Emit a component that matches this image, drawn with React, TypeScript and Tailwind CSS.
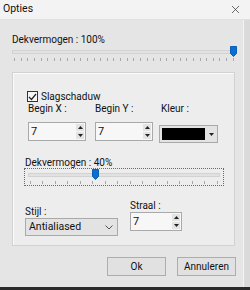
import { X } from "lucide-react";

const font = { fontFamily: '"Roboto", "Noto Sans", sans-serif' };

function Ticks({ count }: { count: number }) {
  return (
    <div className="flex justify-between h-[3px] px-[2px]">
      {Array.from({ length: count }).map((_, i) => (
        <span key={i} className="w-px h-[3px] bg-[#a8a8a8]" />
      ))}
    </div>
  );
}

function Thumb() {
  return (
    <svg width="7" height="11" viewBox="0 0 7 11" className="block">
      <path d="M0.5 0.5 H6.5 V7.5 L3.5 10.5 L0.5 7.5 Z" fill="#0a6fd1" stroke="#0a5fb4" />
    </svg>
  );
}

function Slider({ pos, ticks }: { pos: number; ticks: number }) {
  return (
    <div className="relative">
      <div className="h-[11px] flex items-center">
        <div className="w-full h-[4px] bg-[#e2e2e2] border border-[#d2d2d2]" />
      </div>
      <div className="absolute top-0" style={{ left: pos }}>
        <Thumb />
      </div>
      <div className="mt-[1px]">
        <Ticks count={ticks} />
      </div>
    </div>
  );
}

function Arrow({ up }: { up?: boolean }) {
  return (
    <svg width="5" height="3" viewBox="0 0 5 3" className="block">
      <path d={up ? "M0 3 L2.5 0 L5 3 Z" : "M0 0 L2.5 3 L5 0 Z"} fill="#222" />
    </svg>
  );
}

function Spinner({ value, width }: { value: string; width: string }) {
  return (
    <div className={`flex h-[19px] border border-[#a9a9a9] bg-[#f7f7f7] ${width}`}>
      <div className="flex-1 pl-[2px] text-[11px] leading-[17px] text-[#111]">{value}</div>
      <div className="w-[10px] flex flex-col gap-[1px] p-[1px]">
        <div className="flex-1 bg-[#e3e3e3] flex items-center justify-center">
          <Arrow up />
        </div>
        <div className="flex-1 bg-[#e3e3e3] flex items-center justify-center">
          <Arrow />
        </div>
      </div>
    </div>
  );
}

export default function App() {
  return (
    <div
      className="w-[250px] h-[290px] flex flex-col bg-[#e5e5e5] text-[10px] text-[#111] overflow-hidden"
      style={font}
    >
      <div className="h-[20px] flex items-center justify-between pl-[3px] pr-[8px] bg-[#f3f3f3] border-b border-[#e0e0e0]">
        <span className="leading-none text-[10.5px]">Opties</span>
        <X size={13} strokeWidth={1.2} className="text-[#222]" />
      </div>

      <div className="flex-1 flex">
        <div className="flex-1 flex flex-col pl-[12px]">
          <div className="mt-[14px] h-[11px] leading-[11px]">Dekvermogen : 100%</div>
          <div className="mt-[1px] w-[224px]">
            <Slider pos={218} ticks={34} />
          </div>

          <div className="mt-[11px] w-[223px] h-[174px] border border-[#d2d2d2] bg-[#ededed] shadow-[inset_1px_1px_0_#fafafa] pl-[14px] flex flex-col">
            <div className="mt-[18px] flex items-center gap-[3px] h-[11px]">
              <div className="w-[11px] h-[11px] border border-[#333] bg-[#f6f6f6] flex items-center justify-center">
                <svg width="9" height="8" viewBox="0 0 9 8">
                  <path d="M1 4 L3.5 6.5 L8 1" fill="none" stroke="#222" strokeWidth="1.2" />
                </svg>
              </div>
              <span className="leading-none">Slagschaduw</span>
            </div>

            <div className="mt-[1px] flex items-start gap-[9px]">
              <div className="flex flex-col ml-[1px]">
                <span className="h-[11px] leading-[11px]">Begin X :</span>
                <div className="mt-[8px]">
                  <Spinner value="7" width="w-[58px]" />
                </div>
              </div>
              <div className="flex flex-col">
                <span className="h-[11px] leading-[11px]">Begin Y :</span>
                <div className="mt-[8px]">
                  <Spinner value="7" width="w-[58px]" />
                </div>
              </div>
              <div className="flex flex-col ml-[-3px]">
                <span className="h-[11px] leading-[11px] pl-[2px]">Kleur :</span>
                <div className="mt-[11px] w-[59px] h-[18px] border border-[#a9a9a9] bg-[#e3e3e3] flex p-[2px] gap-[2px]">
                  <div className="w-[43px] bg-black" />
                  <div className="flex-1 flex items-center justify-center">
                    <Arrow />
                  </div>
                </div>
              </div>
            </div>

            <div className="mt-[15px] ml-[-2px] h-[10px] leading-[10px]">Dekvermogen : 40%</div>
            <div className="mt-[0px] ml-[-3px] w-[200px] h-[18px] border border-dotted border-[#6a6a6a] px-[3px]">
              <Slider pos={64} ticks={16} />
            </div>

            <div className="flex items-start">
              <div className="flex flex-col ml-[-2px] mt-[21px]">
                <span className="h-[11px] leading-[10px]">Stijl :</span>
                <div className="w-[93px] h-[18px] border border-[#a9a9a9] bg-[#e3e3e3] flex items-center justify-between pl-[3px] pr-[4px]">
                  <span className="leading-none text-[10.5px]">Antialiased</span>
                  <svg width="8" height="5" viewBox="0 0 8 5">
                    <path d="M0.5 0.5 L4 4 L7.5 0.5" fill="none" stroke="#555" strokeWidth="1" />
                  </svg>
                </div>
              </div>
              <div className="flex flex-col ml-[12px] mt-[15px]">
                <span className="h-[11px] leading-[10px]">Straal :</span>
                <Spinner value="7" width="w-[52px]" />
              </div>
            </div>
          </div>

          <div className="mt-[11px] w-[224px] flex justify-end gap-[11px]">
            <div className="w-[59px] h-[19px] border border-[#adadad] bg-[#e1e1e1] flex items-center justify-center leading-none">
              Ok
            </div>
            <div className="w-[59px] h-[19px] border border-[#adadad] bg-[#e1e1e1] flex items-center justify-center leading-none">
              Annuleren
            </div>
          </div>
        </div>
        <div className="w-[7px] border-l border-[#f4f4f4] bg-[#dadada]" />
      </div>
      <div className="h-[3px] bg-[#2a2a2a]" />
    </div>
  );
}
